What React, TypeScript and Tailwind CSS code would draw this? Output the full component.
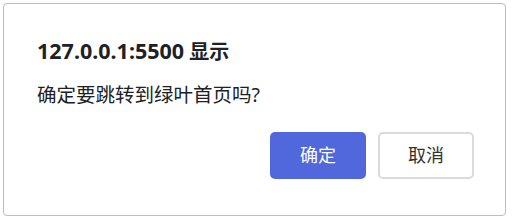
export default function App() {
  return (
    <div className="w-[512px] h-[219px] bg-white p-[3px]" style={{ fontFamily: '"Noto Sans", "Noto Sans CJK SC", sans-serif' }}>
      <div className="w-[503px] h-[213px] border border-[#bdbdbd] rounded-[4px] bg-white pl-[33px] pr-[31px] pt-[35px] flex flex-col">
        <h1 className="text-[20px] leading-[24px] font-bold text-[#202124]">
          <span className="text-[21.5px]">127.0.0.1:5500</span> 显示
        </h1>
        <p className="mt-[19px] text-[19.5px] leading-[24px] text-[#202124]">确定要跳转到绿叶首页吗?</p>
        <div className="mt-[25px] flex justify-end gap-[12px]">
          <button className="w-[96px] h-[47px] rounded-[5px] bg-[#5068dc] text-white text-[18px]">确定</button>
          <button className="w-[96px] h-[47px] rounded-[5px] border-2 border-[#dadada] bg-white text-[#333] text-[18px]">取消</button>
        </div>
      </div>
    </div>
  );
}
